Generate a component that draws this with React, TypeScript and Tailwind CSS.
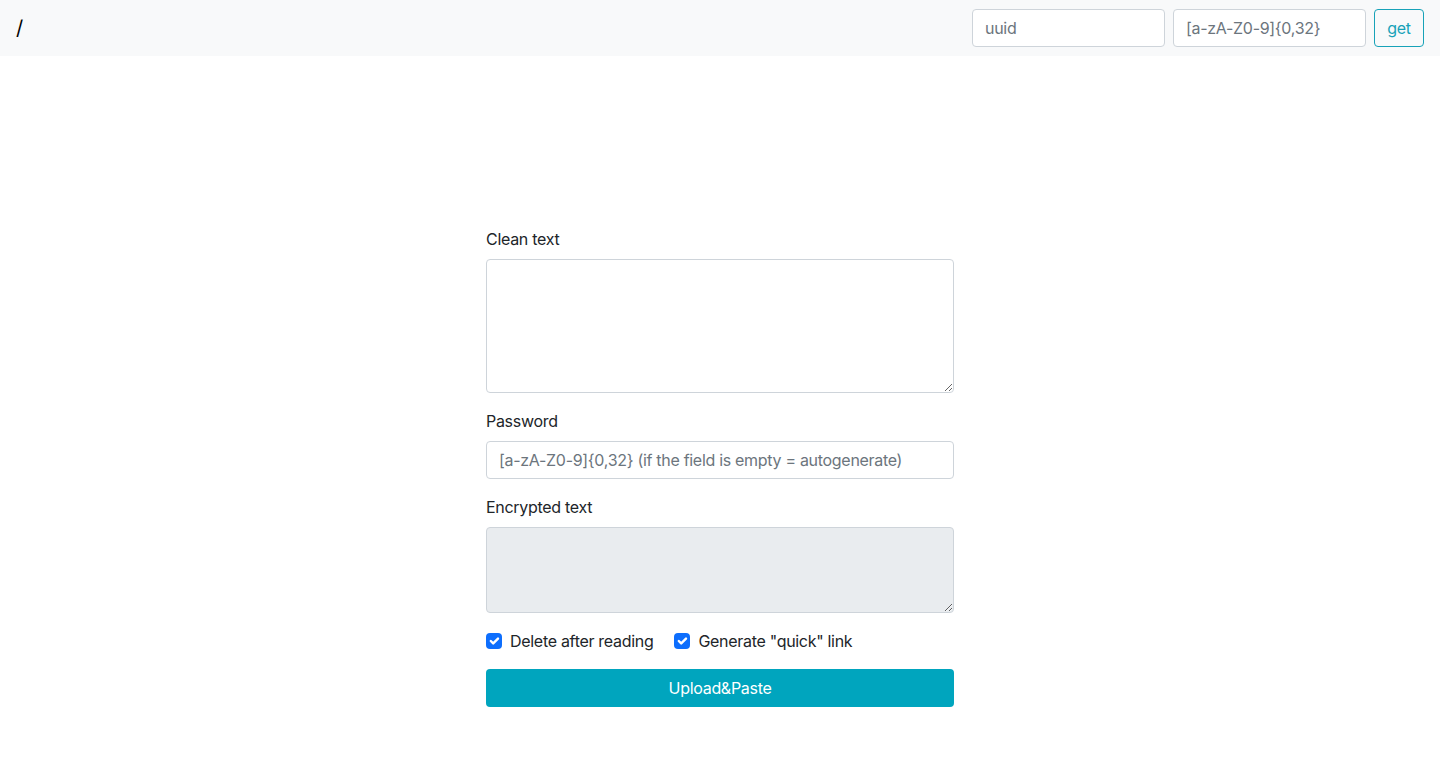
import React from "react";

function Check({ label }: { label: string }) {
  return (
    <label className="flex items-center gap-2">
      <span className="flex h-4 w-4 items-center justify-center rounded-[4px] bg-[#0d6efd]">
        <svg viewBox="0 0 20 20" className="h-4 w-4">
          <path d="M6 10l3 3l6-6" fill="none" stroke="#fff" strokeWidth="3" strokeLinecap="round" strokeLinejoin="round" />
        </svg>
      </span>
      <span>{label}</span>
    </label>
  );
}

export default function App() {
  return (
    <div className="min-h-[765px] bg-white text-[16px] leading-6 tracking-[-0.3px] text-[#212529]" style={{ fontFamily: "Inter, 'Liberation Sans', sans-serif" }}>
      <nav className="flex h-14 items-center justify-between bg-[#f8f9fa] px-4">
        <span className="text-[20px] leading-[30px] text-black">/</span>
        <div className="flex items-center gap-2">
          <input
            className="h-[38px] w-[193px] rounded-[4px] border border-[#ced4da] bg-white px-3 text-[16px] tracking-[-0.3px] text-[#212529] outline-none placeholder:text-[#6c757d]"
            placeholder="uuid"
          />
          <input
            className="h-[38px] w-[193px] rounded-[4px] border border-[#ced4da] bg-white px-3 text-[16px] tracking-[-0.3px] text-[#212529] outline-none placeholder:text-[#6c757d]"
            placeholder="[a-zA-Z0-9]{0,32}"
          />
          <button className="h-[38px] w-[50px] rounded-[4px] border border-[#17a2b8] text-[16px] text-[#17a2b8]">get</button>
        </div>
      </nav>
      <main className="flex justify-center pt-[171px]">
        <div className="flex w-[468px] flex-col">
          <label className="mb-2">Clean text</label>
          <textarea className="mb-4 h-[134px] rounded-[4px] border border-[#ced4da] bg-white px-3 py-1.5 outline-none" />
          <label className="mb-2">Password</label>
          <input
            className="mb-4 h-[38px] rounded-[4px] border border-[#ced4da] bg-white px-3 tracking-[-0.3px] outline-none placeholder:text-[#6c757d]"
            placeholder="[a-zA-Z0-9]{0,32} (if the field is empty = autogenerate)"
          />
          <label className="mb-2">Encrypted text</label>
          <textarea readOnly className="mb-4 h-[86px] rounded-[4px] border border-[#ced4da] bg-[#e9ecef] px-3 py-1.5 outline-none" />
          <div className="mb-4 flex h-6 items-center gap-[21px]">
            <Check label="Delete after reading" />
            <Check label={'Generate "quick" link'} />
          </div>
          <button className="h-[38px] rounded-[4px] bg-[#00a5be] tracking-[-0.3px] text-white">Upload&amp;Paste</button>
        </div>
      </main>
    </div>
  );
}
